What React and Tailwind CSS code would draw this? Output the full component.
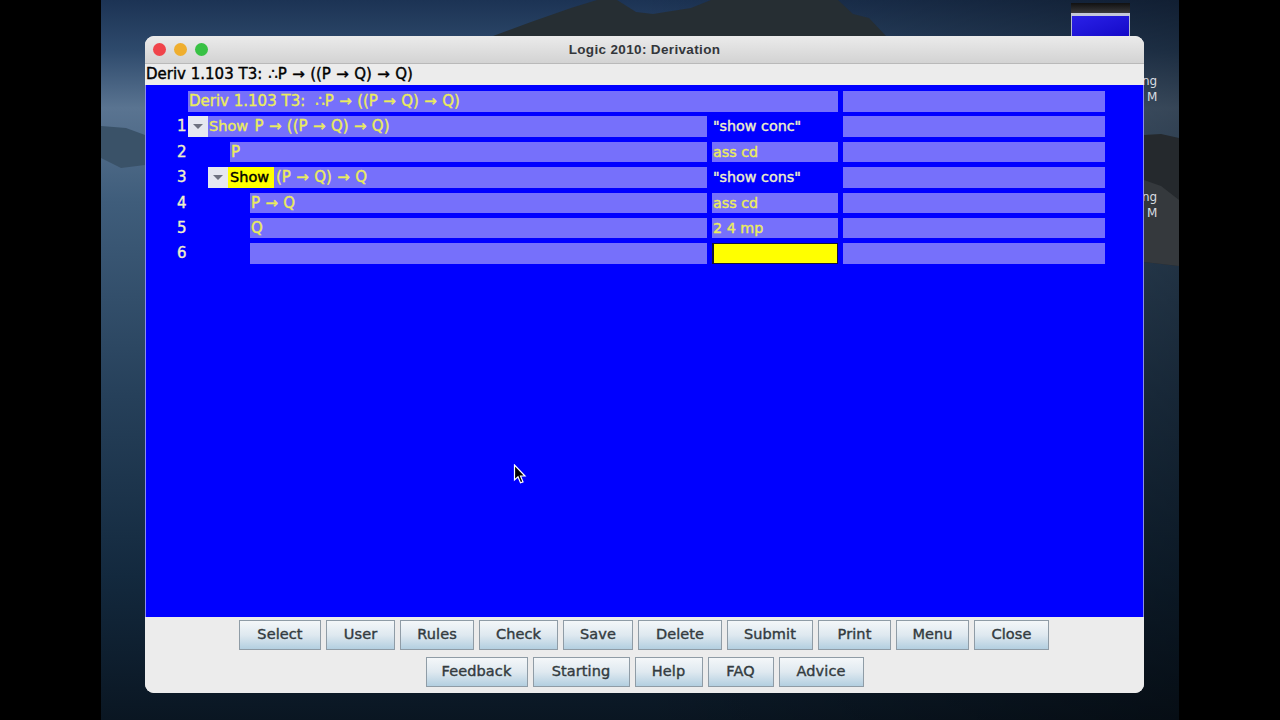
import React from 'react';

const font = "font-['DejaVu_Sans']";
const stroke = "font-normal [-webkit-text-stroke:0.4px_currentColor]";
const weight = `text-[15px] ${stroke}`;
const barBase = `h-[20.5px] bg-[#7670fb] ${stroke} text-[#ebec5c] leading-[21px] whitespace-pre overflow-hidden`;
const barClass = `${barBase} text-[15px]`;
const justBar = `${barBase} text-[14.3px]`;

const Arrows = ({ children, className = '' }) => (
  <span className={`[word-spacing:0.6px] ${className}`}>{children}</span>
);

const rows = [
  { n: '1', toggle: true, indent: 20, word: 'Show', formula: ' P → ((P → Q) → Q)', just: '"show conc"', plainJust: true },
  { n: '2', indent: 42, formula: 'P', just: 'ass cd' },
  { n: '3', toggle: true, indent: 40, show: true, formula: '(P → Q) → Q', just: '"show cons"', plainJust: true },
  { n: '4', indent: 62, formula: 'P → Q', just: 'ass cd' },
  { n: '5', indent: 62, formula: 'Q', just: '2 4 mp' },
  { n: '6', indent: 62, formula: '', just: '', active: true },
];

const row1 = ['Select', 'User', 'Rules', 'Check', 'Save', 'Delete', 'Submit', 'Print', 'Menu', 'Close'];
const row1w = ['w-[82px]', 'w-[69px]', 'w-[74px]', 'w-[79px]', 'w-[70px]', 'w-[84px]', 'w-[86px]', 'w-[73px]', 'w-[73px]', 'w-[75px]'];
const row2 = ['Feedback', 'Starting', 'Help', 'FAQ', 'Advice'];
const row2w = ['w-[102px]', 'w-[97px]', 'w-[68px]', 'w-[66px]', 'w-[85px]'];

const Btn = ({ label, w }) => (
  <button className={`${w} h-[30px] border border-[#8f9ca6] bg-gradient-to-b from-[#f4f7f9] via-[#dfe9f0] to-[#b3cfe0] text-[14.5px] tracking-[0.1px] [-webkit-text-stroke:0.4px_currentColor] text-[#333b40]`}>
    {label}
  </button>
);

const Toggle = () => (
  <div className="w-[20px] h-[20.5px] bg-[#e6e8f0] flex items-center justify-center">
    <svg width="12" height="7" viewBox="0 0 12 7"><path d="M1 1h10L6 6z" fill="#6f7280" /></svg>
  </div>
);

const Wallpaper = () => (
  <svg className="absolute inset-0 w-full h-full" viewBox="0 0 1078 720" preserveAspectRatio="none">
    <defs>
      <linearGradient id="sky" x1="0" y1="0" x2="0" y2="1">
        <stop offset="0" stopColor="#1c3354" />
        <stop offset="0.07" stopColor="#2e4a6c" />
        <stop offset="0.15" stopColor="#5a7491" />
        <stop offset="0.28" stopColor="#3f5d7b" />
        <stop offset="0.55" stopColor="#26405a" />
        <stop offset="0.8" stopColor="#13293e" />
        <stop offset="1" stopColor="#0a1622" />
      </linearGradient>
      <linearGradient id="shade" x1="0" y1="0" x2="1" y2="0">
        <stop offset="0.5" stopColor="#000" stopOpacity="0" />
        <stop offset="1" stopColor="#000" stopOpacity="0.4" />
      </linearGradient>
    </defs>
    <rect width="1078" height="720" fill="url(#sky)" />
    <rect width="1078" height="720" fill="url(#shade)" />
    <path d="M392 36 L430 22 L470 8 L496 0 L516 0 L535 12 L552 14 L590 8 L610 0 L737 0 L752 14 L768 18 L785 36Z" fill="#262e33" />
    <path d="M0 126 L25 128 L44 135 L44 165 L20 168 L0 158Z" fill="#3a5268" />
    <path d="M1043 135 L1060 134 L1078 138 L1078 266 L1043 262Z" fill="#25292d" />
    <path d="M1043 180 L1060 186 L1078 200 L1078 266 L1043 262Z" fill="#35393d" />
  </svg>
);

export default function App() {
  return (
    <div className={`relative w-[1280px] h-[720px] overflow-hidden bg-black ${font}`}>
      <div className="absolute left-[101px] top-0 w-[1078px] h-[720px] overflow-hidden">
        <Wallpaper />
        {/* other window peeking out behind */}
        <div className="absolute left-[970px] top-[3px] w-[59px] h-[33px]">
          <div className="h-[10px] bg-gradient-to-b from-[#111] to-[#3a3a3c]" />
          <div className="h-[3px] bg-[#c4c8d8]" />
          <div className="h-[20px] bg-gradient-to-br from-[#2a20e8] to-[#1408c8] border-x border-[#b4bad0]" />
        </div>
        {/* desktop icon labels */}
        <div className="absolute left-[1041px] top-[73px] text-[12px] font-medium leading-[16px] text-[#d8dde2]">
          <div>ng</div>
          <div className="pl-[5px]">M</div>
        </div>
        <div className="absolute left-[1041px] top-[189px] text-[12px] font-medium leading-[16px] text-[#d8dde2]">
          <div>ng</div>
          <div className="pl-[5px]">M</div>
        </div>
      </div>

      {/* window */}
      <div className="absolute left-[145px] top-[36px] w-[999px] h-[657px] rounded-[9px] overflow-hidden bg-[#ececec] flex flex-col">
        <div className="relative h-[28px] shrink-0 pt-[1px] bg-gradient-to-b from-[#ebebeb] to-[#d3d3d3] border-b border-[#b9b9b9] flex items-center justify-center">
          <div className="absolute left-[8px] top-[7px] flex gap-[8px]">
            <span className="w-[13px] h-[13px] rounded-full bg-[#f0444b]" />
            <span className="w-[13px] h-[13px] rounded-full bg-[#efae2e]" />
            <span className="w-[13px] h-[13px] rounded-full bg-[#38c144]" />
          </div>
          <span className="text-[13.5px] font-bold text-[#33363a] font-['Liberation_Sans'] tracking-[0.35px]">Logic 2010: Derivation</span>
        </div>
        <div className={`h-[21px] shrink-0 bg-[#ececec] pl-[1px] ${weight} leading-[21px] text-black whitespace-pre`}>
          Deriv 1.103 T3:<Arrows className="ml-[6px]">∴P → ((P → Q) → Q)</Arrows>
        </div>

        <div className="flex-1 bg-[#0000ff] border-r border-l border-[#8a8ce8] pt-[6px] flex flex-col gap-[4.9px]">
          <div className="flex gap-[5px] pl-[42px] h-[20.5px]">
            <div className={`w-[650px] pl-[1px] ${barClass}`}>Deriv 1.103 T3:<Arrows className="ml-[10px]">∴P → ((P → Q) → Q)</Arrows></div>
            <div className={`w-[262px] ${barClass}`} />
          </div>
          {rows.map((r) => (
            <div key={r.n} className="flex h-[20.5px]">
              <div className={`w-[42px] h-[20.5px] shrink-0 pl-[31px] ${weight} leading-[21px] text-[#f0f0c8]`}>{r.n}</div>
              <div className="w-[519px] shrink-0 flex">
                <div className="shrink-0 flex justify-end" style={{ width: r.indent }}>
                  {r.toggle && <Toggle />}
                </div>
                <div className={`flex-1 ${barClass}`}>
                  {r.show && <span className="inline-block w-[46px] h-[21px] bg-[#ffff00] text-black pl-[2px] mr-[2px] text-[14.5px]">Show</span>}
                  {!r.show && <span className="pl-[1px]" />}
                  {r.word && <span className="text-[14.5px] mr-[1px]">{r.word}</span>}
                  <Arrows>{r.formula}</Arrows>
                </div>
              </div>
              <div className="flex gap-[5px] pl-[5px]">
                {r.active ? (
                  <div className="w-[126px] h-[20.5px] bg-[#ffff00] border border-l-2 border-[#14143c]" />
                ) : r.plainJust ? (
                  <div className={`w-[126px] h-[20.5px] pl-[1px] ${stroke} text-[14.3px] leading-[21px] text-[#f0f0c8] whitespace-pre`}>{r.just}</div>
                ) : (
                  <div className={`w-[126px] pl-[1px] ${justBar}`}>{r.just}</div>
                )}
                <div className={`w-[262px] ${barClass}`} />
              </div>
            </div>
          ))}
        </div>

        <div className="h-[76px] shrink-0 bg-[#ececec] pt-[3px] flex flex-col items-center gap-[7px]">
          <div className="flex gap-[5px] pr-[1px]">
            {row1.map((b, i) => <Btn key={b} label={b} w={row1w[i]} />)}
          </div>
          <div className="flex gap-[5px]">
            {row2.map((b, i) => <Btn key={b} label={b} w={row2w[i]} />)}
          </div>
        </div>
      </div>

      {/* mouse cursor */}
      <svg className="absolute left-[513px] top-[464px]" width="14" height="21" viewBox="0 0 14 21">
        <path d="M1.5 1 L1.5 16 L5 12.8 L7.5 18.8 L10 17.8 L7.5 12 L12 12 Z" fill="#000" stroke="#fff" strokeWidth="1.2" />
      </svg>
    </div>
  );
}
